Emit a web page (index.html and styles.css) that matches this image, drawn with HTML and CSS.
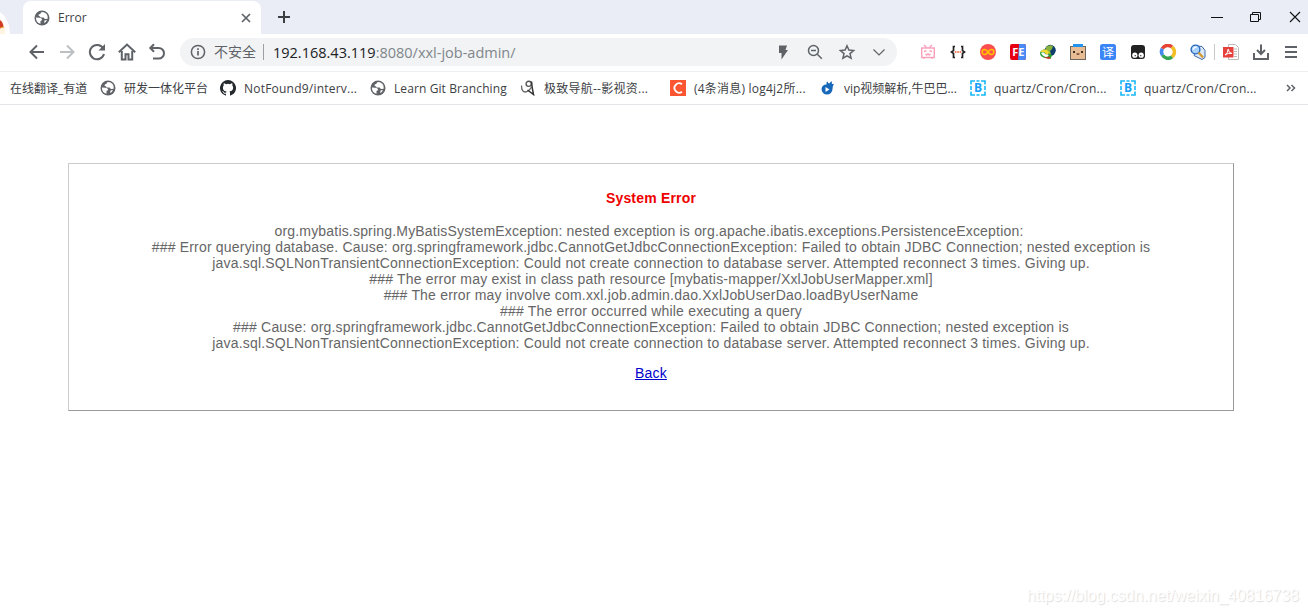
FILE: index.html
```html
<!DOCTYPE html>
<html lang="zh-CN">
<head>
  <meta charset="UTF-8">
  <title>Error</title>
  <link rel="stylesheet" href="styles.css">
</head>
<body>
  <svg class="defs" width="0" height="0">
    <symbol id="globe" viewBox="0 0 16 16">
      <circle cx="8" cy="8" r="7.500" fill="#5f6368"/>
      <path d="M8.500 1.900Q6.300 2.300 6.700 3.500L4.600 4.700Q4.200 6.400 6 6.200l.4 1.200 3.300.2q.5 1.500 1.800 1.300l2.200-.2Q14 4 10.500 2.500zM1.900 7.500l3.600.2q2.700.4 2.700 2.300l-1.700 1v2.700Q2 12.800 1.900 7.500zM10.500 10.400l2.500-.3q-1 2.500-2.800 3z" fill="#fff"/>
    </symbol>
    <symbol id="blocks" viewBox="0 0 16 16">
      <path d="M1 4.500V1h4M6.500 1h3M11 1h4v3.500M15 11.500V15h-4M9.500 15h-3M5 15H1v-3.500M1 6v4M15 6v4" fill="none" stroke="#17b8f8" stroke-width="1.600"/>
    </symbol>
  </svg>

  <div class="tabstrip">
    <svg class="avatar" width="10" height="34" viewBox="0 0 10 34">
      <path d="M0 12q9 6 10 21v1H0z" fill="#fff"/>
      <path d="M0 19l3 2.500 2 6.500v6H0z" fill="#fff4df"/>
      <path d="M0 20q3 2 3.500 6.500L0 28.500z" fill="#cf3e24"/>
      <path d="M0 28l4-1" stroke="#e9a030"/>
    </svg>
    <div class="tab">
      <svg width="16" height="16"><use href="#globe"/></svg>
      <span class="tab-title">Error</span>
      <svg width="10" height="10" viewBox="0 0 10 10"><path d="M1 1l8 8M9 1L1 9" stroke="#5f6368" stroke-width="1.700"/></svg>
    </div>
    <svg class="new-tab" width="12" height="12" viewBox="0 0 12 12"><path d="M6 0v12M0 6h12" stroke="#3c4043" stroke-width="2"/></svg>
    <div class="window-controls">
      <svg width="12" height="12" viewBox="0 0 12 12"><path d="M0 6.500h12" stroke="#111"/></svg>
      <svg width="12" height="12" viewBox="0 0 12 12"><path d="M.5 3.500h8v7h-8zM2.500 3.500v-2h8v7h-2" fill="none" stroke="#111"/></svg>
      <svg width="12" height="12" viewBox="0 0 12 12"><path d="M1 1l10 10M11 1L1 11" stroke="#111" stroke-width="1.100"/></svg>
    </div>
  </div>

  <div class="toolbar">
    <div class="cells nav">
      <svg width="18" height="18" viewBox="0 0 18 18"><path d="M16 9H3M9 2.500L2.500 9 9 15.500" class="line"/></svg>
      <svg width="18" height="18" viewBox="0 0 18 18"><path d="M2 9h13M9 2.500L15.500 9 9 15.500" class="line pale"/></svg>
      <svg width="18" height="18" viewBox="0 0 18 18"><path d="M15.300 5.500A7.200 7.200 0 1 0 16 11" class="line"/><path d="M17 1v6.500h-6.500z" fill="#5f6368"/></svg>
      <svg width="18" height="18" viewBox="0 0 18 18"><path d="M.8 9.200L9 1.500l8.200 7.700M3.800 8v8.500h3.700v-5.200h3v5.200h3.700V8" class="line"/></svg>
      <svg width="18" height="18" viewBox="0 0 18 18"><path d="M2.500 5h8.200a5.300 5.300 0 0 1 0 10.600H5M6 1.200L2.300 5 6 8.800" class="line"/></svg>
    </div>
    <div class="omnibox">
      <svg width="16" height="16" viewBox="0 0 16 16"><circle cx="8" cy="8" r="6.600" fill="none" stroke="#5f6368" stroke-width="1.500"/><path d="M8 7v4.500M8 4.200v1.700" stroke="#5f6368" stroke-width="1.700"/></svg>
      <span class="insecure">不安全</span>
      <span class="url"><b>192.168.43.119</b>:8080/xxl-job-admin/</span>
      <div class="cells actions">
        <svg width="16" height="16" viewBox="0 0 16 16"><path d="M4 1.500h8L10.500 6H13l-6.500 9.500V9H4z" fill="#5f6368"/></svg>
        <svg width="16" height="16" viewBox="0 0 16 16"><path d="M10.300 10.300l4.500 4.500M4 6.500h5" class="line thin"/><circle cx="6.500" cy="6.500" r="5" class="line thin"/></svg>
        <svg width="16" height="16" viewBox="0 0 16 16"><path d="M8 1.800l1.900 4.300 4.700.4-3.600 3.100 1.100 4.600L8 11.800l-4.100 2.400L5 9.600 1.400 6.500l4.700-.4z" class="line thin"/></svg>
        <svg width="16" height="16" viewBox="0 0 16 16"><path d="M2.500 5.500L8 11l5.500-5.500" class="line hair"/></svg>
      </div>
    </div>
    <div class="cells extensions">
      <svg width="16" height="16" viewBox="0 0 16 16"><g fill="none" stroke="#fb9ebb" stroke-width="1.400"><rect x="1.700" y="4" width="12.600" height="9.500"/><path d="M4 1l3 3M12 1L9 4M4 7.500l2.500-.9M9.500 6.600l2.500.9M5.500 10l1.200 1L8 10l1.300 1 1.200-1M4 13.500V15M12 13.500V15"/></g></svg>
      <svg width="16" height="16" viewBox="0 0 16 16"><path d="M5 2.500H3.500v4L1.500 8l2 1.500v4H5M11 2.500h1.500v4l2 1.500-2 1.500v4H11" fill="none" stroke="#222" stroke-width="1.700"/><path d="M4.800 8h1.600M7.200 8h1.600M9.600 8h1.600" stroke="#f0582c" stroke-width="1.700"/></svg>
      <svg width="16" height="16" viewBox="0 0 16 16"><circle cx="8" cy="8" r="8" fill="#fb4e4e"/><path d="M8 8Q6.500 5.500 4.600 5.500a2.500 2.500 0 0 0 0 5Q6.500 10.500 8 8t3.400-2.500a2.500 2.500 0 0 1 0 5Q9.500 10.500 8 8z" fill="none" stroke="#ffc400" stroke-width="1.500"/></svg>
      <svg width="16" height="16" viewBox="0 0 16 16"><rect width="16" height="16" rx="2" fill="#e60012"/><path d="M9 0h5a2 2 0 0 1 2 2v12a2 2 0 0 1-2 2H8z" fill="#4a8af4"/><text x="8.300" y="12" text-anchor="middle" class="icon-letter" fill="#fff">FE</text></svg>
      <svg width="16" height="16" viewBox="0 0 16 16"><ellipse cx="6.500" cy="9.500" rx="6.500" ry="4.500" fill="#2a9e35"/><path d="M3 12.500q4 2 8-1v3q-4 1.500-8-2z" fill="#c33621"/><circle cx="10.300" cy="6.300" r="5.500" fill="#123e6c"/><path d="M6 3q4-3 7-1l-1 3-2 2 1 3-2 1-3-4z" fill="#85b33b"/><path d="M0 8q4-4 7-2l3 3-3 2-3-3z" fill="#f0da32"/><path d="M1 9q3-2 4 1l4 1-2 2q-4 0-6-4z" fill="#fff"/><path d="M8 9l4 2-1.500 4z" fill="#2ca32f"/></svg>
      <svg width="16" height="16" viewBox="0 0 16 16"><rect x=".5" y="2.500" width="15" height="13" fill="#e8bd93" stroke="#6d675d"/><path d="M3 0h10v3H3z" fill="#2393ed"/><circle cx="4" cy="8" r="1"/><circle cx="12" cy="8" r="1"/><path d="M6.700 9.500q1.300 1.500 2.600 0" fill="none" stroke="#5b3427" stroke-width="1.200"/></svg>
      <svg width="16" height="16" viewBox="0 0 16 16"><rect width="16" height="16" rx="2.500" fill="#3b86f7"/><text x="8" y="12.500" text-anchor="middle" class="icon-cjk" fill="#fff">译</text></svg>
      <svg width="16" height="16" viewBox="0 0 16 16"><rect x="1" y="1" width="14" height="14" rx="3" fill="#222"/><circle cx="4.800" cy="11.200" r="2.600" fill="#fff"/><circle cx="11.200" cy="11.200" r="2.600" fill="#fff"/><circle cx="5.200" cy="11.700" r=".6"/><circle cx="10.800" cy="11.700" r=".6"/></svg>
      <svg width="16" height="16" viewBox="0 0 16 16"><g fill="none" stroke-width="3.500"><path d="M2.300 4.600A6.300 6.300 0 0 1 12 3" stroke="#e44335"/><path d="M12 3a6.300 6.300 0 0 1 0 9.900" stroke="#f4bd24"/><path d="M12 12.900A6.300 6.300 0 0 1 2.500 11" stroke="#34a653"/><path d="M2.500 11a6.300 6.300 0 0 1-.2-6.400" stroke="#4387ef"/></g></svg>
      <svg width="16" height="16" viewBox="0 0 16 16"><path d="M7 2l5 .5 3 4v7l-3 2-8-4z" fill="#dce9fa" stroke="#3e67a6"/><circle cx="5.500" cy="5.500" r="4.400" fill="#a9d3ff" stroke="#2865ba" stroke-width="1.400"/><path d="M3 5.500q1-2.500 3.500-2.500" fill="none" stroke="#fff" stroke-width="1.300"/><path d="M8.500 8.500l4.500 5" stroke="#d49a2f" stroke-width="2.200"/></svg>
    </div>
    <span class="separator"></span>
    <div class="cells">
      <svg width="16" height="16" viewBox="0 0 16 16"><path d="M5.500.5h7l3 3v12h-10z" fill="#fff" stroke="#bbb"/><path d="M11 5h3M11 7.500h3M11 10h3M11 12.500h3" stroke="#bbb"/><rect y="3" width="10.500" height="10.500" fill="#e5413d"/><path d="M2 11q3-2 3.200-6 .3 4 3.800 4.500Q5 8.500 2 11z" fill="none" stroke="#fff"/></svg>
      <svg width="18" height="18" viewBox="0 0 18 18"><path d="M9 1.500v9M5 7l4 4 4-4M2 10v6h14v-6" class="line"/></svg>
      <svg class="menu" width="12" height="14" viewBox="0 0 12 14"><path d="M0 2h12M0 7h12M0 12h12" class="line"/></svg>
    </div>
  </div>

  <div class="bookmarks">
    <div class="bookmark first"><span>在线翻译_有道</span></div>
    <div class="bookmark short"><svg width="16" height="16"><use href="#globe"/></svg><span>研发一体化平台</span></div>
    <div class="bookmark"><svg width="16" height="16" viewBox="0 0 16 16"><path fill="#24292e" d="M8 0a8 8 0 0 0-2.530 15.590c.4.070.55-.17.550-.38v-1.490c-2.230.48-2.700-.95-2.700-.95-.36-.92-.89-1.170-.89-1.170-.73-.5.050-.49.050-.49.810.060 1.230.83 1.230.83.720 1.230 1.880.87 2.340.67.070-.52.280-.87.510-1.070-1.780-.2-3.640-.89-3.640-3.950 0-.87.310-1.590.820-2.150-.08-.2-.36-1.020.080-2.120 0 0 .67-.21 2.200.82a7.600 7.600 0 0 1 4 0c1.530-1.040 2.200-.82 2.200-.82.440 1.100.16 1.920.080 2.120.51.560.82 1.270.82 2.150 0 3.070-1.870 3.750-3.650 3.950.29.250.54.730.54 1.480v2.190c0 .21.150.46.550.38A8 8 0 0 0 8 0z"/></svg><span class="latin">NotFound9/interv...</span></div>
    <div class="bookmark"><svg width="16" height="16"><use href="#globe"/></svg><span class="learn">Learn Git Branching</span></div>
    <div class="bookmark"><svg width="16" height="16" viewBox="0 0 16 16"><path d="M1.500 5.500q0 6.500 4 6.500 3.500-.5 6-5" fill="none" stroke="#666" stroke-width="1.300"/><circle cx="8.700" cy="3.800" r="2.600" fill="none" stroke="#555" stroke-width="1.400"/><path d="M11.500 1.500q.5 6 2 13L7.500 10" fill="none" stroke="#333" stroke-width="1.500"/></svg><span class="mixed">极致导航--影视资...</span></div>
    <div class="bookmark"><svg width="16" height="16" viewBox="0 0 16 16"><rect width="16" height="16" fill="#fc5531"/><path d="M12 4.200A4.700 4.700 0 1 0 12 11.800" fill="none" stroke="#fff" stroke-width="1.800"/></svg><span class="latin">(4条消息) log4j2所...</span></div>
    <div class="bookmark"><svg width="16" height="16" viewBox="0 0 16 16"><path d="M1.500 9Q2 4.500 6.500 4.500q-.5-2.500 1-3 .5 2 2 2 1-2.500 2.500-2-.5 1.500 0 2.500h2q-1.500 1.500-1.500 5a5.500 5.500 0 0 1-11 0z" fill="#1768b8"/><path d="M5.500 7l4 2.500-4 2.500z" fill="#fff"/></svg><span>vip视频解析,牛巴巴...</span></div>
    <div class="bookmark"><span class="block-icon"><svg width="16" height="16"><use href="#blocks"/></svg><b>B</b></span><span class="latin">quartz/Cron/Cron...</span></div>
    <div class="bookmark"><span class="block-icon"><svg width="16" height="16"><use href="#blocks"/></svg><b>B</b></span><span class="latin">quartz/Cron/Cron...</span></div>
    <svg class="overflow" width="10" height="8" viewBox="0 0 10 8"><path d="M1 1l3 3-3 3M5.500 1l3 3-3 3" fill="none" stroke="#5f6368" stroke-width="1.500"/></svg>
  </div>

  <div class="page">
    <div class="dialog">
      <h1>System Error</h1>
      <p>
        org.mybatis.spring.MyBatisSystemException: nested exception is org.apache.ibatis.exceptions.PersistenceException:&nbsp;<br>
        ### Error querying database. Cause: org.springframework.jdbc.CannotGetJdbcConnectionException: Failed to obtain JDBC Connection; nested exception is<br>
        java.sql.SQLNonTransientConnectionException: Could not create connection to database server. Attempted reconnect 3 times. Giving up.<br>
        ### The error may exist in class path resource [mybatis-mapper/XxlJobUserMapper.xml]<br>
        ### The error may involve com.xxl.job.admin.dao.XxlJobUserDao.loadByUserName<br>
        ### The error occurred while executing a query<br>
        ### Cause: org.springframework.jdbc.CannotGetJdbcConnectionException: Failed to obtain JDBC Connection; nested exception is<br>
        java.sql.SQLNonTransientConnectionException: Could not create connection to database server. Attempted reconnect 3 times. Giving up.
      </p>
      <a href="#">Back</a>
    </div>
    <div class="watermark">https://blog.csdn.net/weixin_40816738</div>
  </div>
</body>
</html>
```

FILE: styles.css
```css
* {
  box-sizing: border-box;
}
body {
  margin: 0;
  height: 614px;
  display: flex;
  flex-direction: column;
  overflow: hidden;
  background: #fff;
  font-family: "Open Sans", "Noto Sans CJK SC", sans-serif;
  font-size: 12px;
  color: #3c4043;
}
svg {
  display: block;
  flex: none;
}
.defs {
  position: absolute;
}
.line {
  fill: none;
  stroke: #5f6368;
  stroke-width: 2;
}
.thin {
  stroke-width: 1.5;
}
.hair {
  stroke-width: 1.2;
}
.pale {
  stroke: #bdc0c3;
}
.icon-letter {
  font: bold 11px "Open Sans", sans-serif;
}
.icon-cjk {
  font: 12px "Noto Sans CJK SC", sans-serif;
}

/* tab strip */
.tabstrip {
  display: flex;
  align-items: center;
  height: 34px;
  background: #eaedf5;
}
.tab {
  display: flex;
  align-items: center;
  align-self: flex-end;
  width: 238px;
  height: 33px;
  margin-left: 13px;
  padding: 0 10px 0 11px;
  border-radius: 8px 8px 0 0;
  background: #fff;
}
.tab-title {
  flex: 1;
  margin-left: 8px;
}
.new-tab {
  margin-left: 17px;
}
.window-controls {
  display: flex;
  gap: 27px;
  margin-left: auto;
  padding-right: 7px;
}

/* toolbar */
.toolbar {
  display: flex;
  align-items: center;
  height: 38px;
  padding-bottom: 1px;
  border-bottom: 1px solid #eceef0;
}
.cells {
  display: flex;
  align-items: center;
}
.cells svg {
  width: 30px;
}
.nav {
  margin-left: 22px;
}
.omnibox {
  display: flex;
  align-items: center;
  width: 717px;
  height: 28px;
  margin: 0 16px 0 8px;
  padding: 0 2px 0 10px;
  border-radius: 14px;
  background: #f1f3f4;
  font-size: 14.5px;
  color: #80868b;
}
.insecure {
  margin: 0 9px 0 8px;
  padding-right: 7px;
  border-right: 1px solid #9aa0a6;
  font-size: 14px;
  line-height: 16px;
  color: #5f6368;
}
.url b {
  font-weight: normal;
  color: #202124;
}
.actions {
  margin-left: auto;
}
.actions svg {
  width: 32px;
}
.separator {
  width: 1px;
  height: 16px;
  margin: 0 1px;
  background: #c5c8cb;
}

/* bookmarks bar */
.bookmarks {
  display: flex;
  align-items: center;
  height: 33px;
  border-bottom: 1px solid #e3e5e8;
}
.bookmark {
  display: flex;
  align-items: center;
  gap: 8px;
  width: 150px;
  white-space: nowrap;
}
.latin {
  letter-spacing: 0.22px;
}
.learn {
  letter-spacing: 0.1px;
}
.mixed {
  letter-spacing: 0.25px;
}
.first {
  width: 90px;
  margin-left: 10px;
}
.short {
  width: 120px;
}
.block-icon {
  display: grid;
  place-items: center;
}
.block-icon > * {
  grid-area: 1 / 1;
}
.block-icon b {
  font-size: 12px;
  line-height: 16px;
  color: #16a0f8;
}
.overflow {
  margin-left: 16px;
}

/* error page */
.page {
  flex: 1;
  display: flex;
  flex-direction: column;
  padding: 58px 9px 0 68px;
  font-family: "Liberation Sans", Arial, sans-serif;
  font-size: 14px;
  line-height: 16px;
}
.dialog {
  width: 1166px;
  height: 248px;
  padding: 26px 0 0;
  border: 1px solid;
  border-color: #ccc #999 #999 #ccc;
  text-align: center;
  letter-spacing: 0.19px;
  color: #666;
}
.dialog h1 {
  margin: 0 0 17px;
  font-size: 14px;
  line-height: 16px;
  color: #e00;
}
.dialog p {
  margin: 0 0 14px;
  white-space: nowrap;
}
.dialog a {
  color: #0000cc;
}
.watermark {
  margin: auto 0 8px auto;
  font-size: 16px;
  line-height: 20px;
  color: #fff;
  text-shadow: 1px 1px 1px #ddd;
}
```
